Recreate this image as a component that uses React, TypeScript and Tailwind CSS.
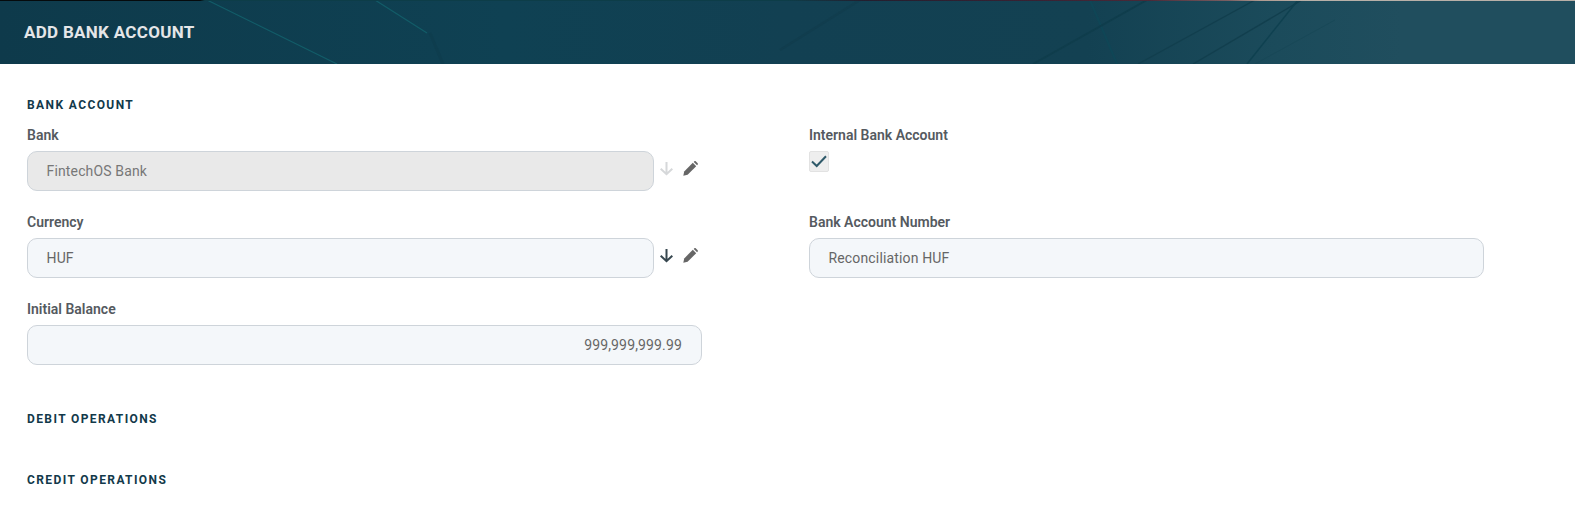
function HeaderLines() {
  return (
    <svg className="absolute inset-0 h-full w-full" viewBox="0 0 1575 64" preserveAspectRatio="none" fill="none">
      <path d="M207 0 L337 64" stroke="#125c68" strokeWidth="1.2" />
      <path d="M375 0 L427 33" stroke="#125c68" strokeWidth="1.2" />
      <path d="M430 33 L443 64" stroke="#0d3a49" strokeWidth="3" opacity="0.35" />
      <path d="M780 50 L860 0" stroke="#0f3a49" strokeWidth="2.5" opacity="0.5" />
      <path d="M1090 0 L1117 64" stroke="#0f4656" strokeWidth="2" />
      <path d="M1033 64 L1147 0" stroke="#0f3d4c" strokeWidth="2" />
      <path d="M1138 64 L1255 0" stroke="#123f4e" strokeWidth="1.4" />
      <path d="M1193 64 L1302 0" stroke="#123f4e" strokeWidth="1.4" />
      <path d="M1247 64 L1298 0" stroke="#0f4150" strokeWidth="1.5" />
      <path d="M1255 64 L1335 20" stroke="#184757" strokeWidth="0.8" />
      <rect x="205" y="0" width="4" height="1" fill="#2fb5a0" />
      <rect x="373" y="0" width="4" height="1" fill="#2fb5a0" />
    </svg>
  );
}

function Label({ children }: { children: string }) {
  return <div className="mb-[6px] h-[20px] text-[14px] leading-[20px] font-semibold text-[#555a5f]">{children}</div>;
}

function SectionTitle({ children }: { children: string }) {
  return <div className="text-[12px] leading-[16px] font-bold tracking-[1.4px] text-[#12394a]">{children}</div>;
}

function Input({ value, disabled, right }: { value: string; disabled?: boolean; right?: boolean }) {
  return (
    <div
      className={`flex h-[40px] flex-1 items-center rounded-[10px] border border-[#ced4da] pr-[19px] pl-[18.5px] text-[14px] tracking-[0.15px] ${
        disabled ? "bg-[#e9e9e9] text-[#777]" : "bg-[#f4f7fa] text-[#666]"
      } ${right ? "justify-end" : ""}`}
    >
      {value}
    </div>
  );
}

function LookupField({ value, disabled }: { value: string; disabled?: boolean }) {
  return (
    <div className="flex w-[675px] items-center">
      <Input value={value} disabled={disabled} />
      <div className="flex w-[48px] shrink-0 -translate-y-[3px] items-center pl-[5px]">
        <svg width="15" height="15" viewBox="0 0 15 15" fill="none" stroke={disabled ? "#d6d8da" : "#37474f"} strokeWidth="2">
          <path d="M7.5 1 V13 M1.7 7.7 L7.5 13.2 L13.3 7.7" />
        </svg>
        <svg className="ml-[9px]" width="15" height="15" viewBox="0 0 15 15" fill="#666">
          <path d="M0.3 14.7 L1.2 10.4 L9.8 1.8 L13.2 5.2 L4.6 13.8 Z" />
          <path d="M10.7 0.9 L11.4 0.3 C11.8 0 12.3 0 12.7 0.3 L14.7 2.3 C15 2.7 15 3.2 14.7 3.6 L14.1 4.3 Z" />
        </svg>
      </div>
    </div>
  );
}

export default function App() {
  return (
    <div className="h-[530px] w-[1575px] overflow-hidden bg-white font-['Roboto',sans-serif]">
      <div className="relative flex h-16 items-center overflow-hidden bg-[linear-gradient(90deg,#0e3a4b_0%,#0f4153_32%,#124052_50%,#134152_69%,#1b4b5b_81%,#204e5e_89%,#204e5e_100%)] px-6">
        <HeaderLines />
        <div className="absolute inset-x-0 top-0 h-px bg-[linear-gradient(90deg,#050a0c_0%,#050a0c_12.7%,#0d3d48_13%,#0d3d48_50%,#241e2e_55%,#3a2233_66%,#4a2a38_73%,#7a5f62_78%,#b09a90_80%,#b8b0a8_83%,#b8b0a8_100%)]" />
        <h1 className="relative mt-[1px] text-[17px] font-bold tracking-[0.3px] text-[#e4e6e8]">ADD BANK ACCOUNT</h1>
      </div>

      <div className="pt-[33px] pl-[27px]">
        <SectionTitle>BANK ACCOUNT</SectionTitle>

        <div className="mt-[12px] flex">
          <div className="flex w-[782px] flex-col gap-[21px]">
            <div>
              <Label>Bank</Label>
              <LookupField value="FintechOS Bank" disabled />
            </div>
            <div>
              <Label>Currency</Label>
              <LookupField value="HUF" />
            </div>
            <div>
              <Label>Initial Balance</Label>
              <div className="flex w-[675px]">
                <Input value="999,999,999.99" right />
              </div>
            </div>
          </div>

          <div className="flex flex-col gap-[21px]">
            <div className="h-[66px]">
              <Label>Internal Bank Account</Label>
              <div className="mt-[1px] flex h-[21px] w-[20px] items-center justify-center rounded-[2px] border border-[#e2e2e2] bg-[#eeeeee]">
                <svg width="16" height="13" viewBox="0 0 16 13" fill="none" stroke="#2f5a6a" strokeWidth="2">
                  <path d="M1 6.5 L5.7 11 L15 1.2" />
                </svg>
              </div>
            </div>
            <div>
              <Label>Bank Account Number</Label>
              <div className="flex w-[675px]">
                <Input value="Reconciliation HUF" />
              </div>
            </div>
          </div>
        </div>

        <div className="mt-[46px]">
          <SectionTitle>DEBIT OPERATIONS</SectionTitle>
        </div>
        <div className="mt-[45px]">
          <SectionTitle>CREDIT OPERATIONS</SectionTitle>
        </div>
      </div>
    </div>
  );
}
